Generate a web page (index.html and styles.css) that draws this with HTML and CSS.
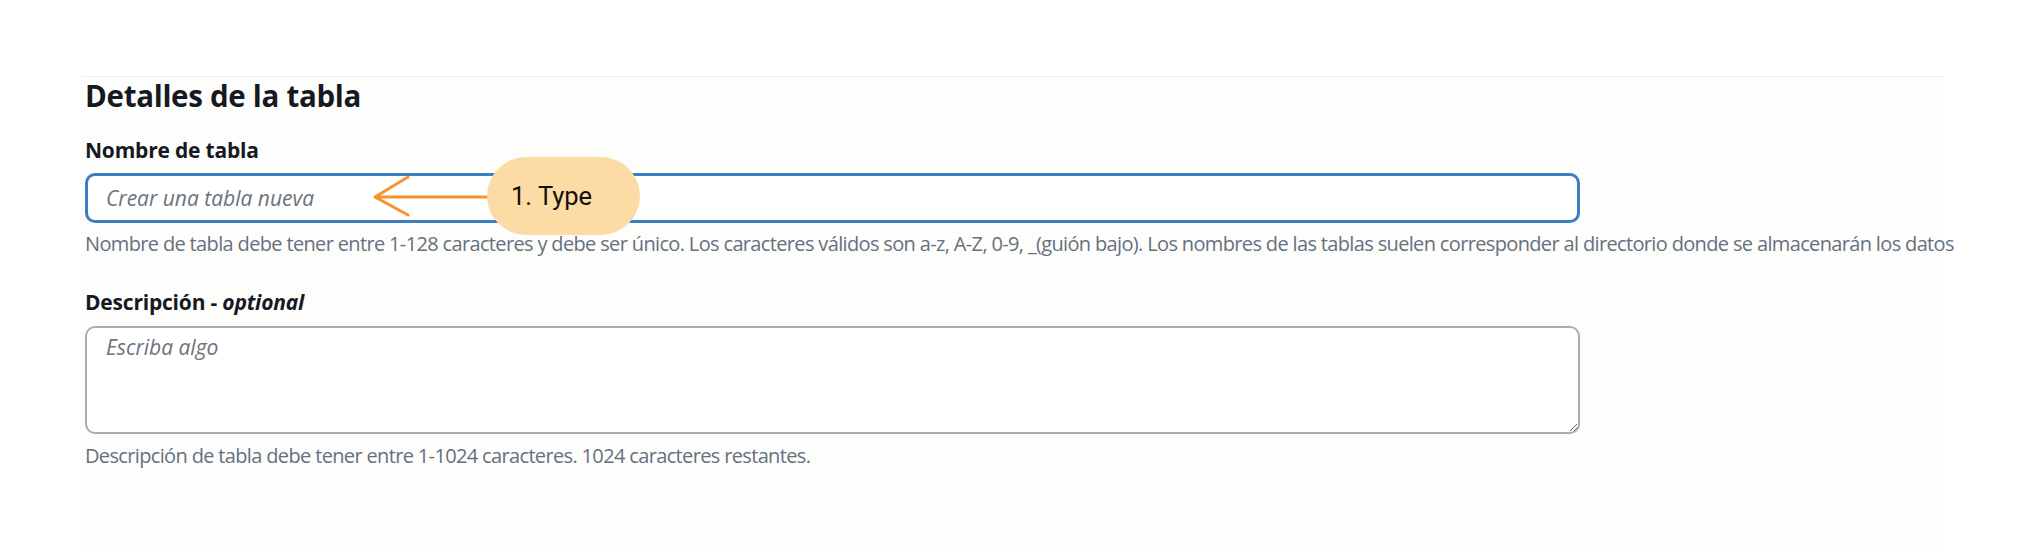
FILE: index.html
```html
<!DOCTYPE html>
<html lang="es">
<head>
<meta charset="utf-8">
<title>Detalles de la tabla</title>
<link rel="stylesheet" href="styles.css">
</head>
<body>
<section class="panel">
  <h2 class="title">Detalles de la tabla</h2>
  <div class="field">
    <label class="label" for="tname">Nombre de tabla</label>
    <input id="tname" class="input" type="text" placeholder="Crear una tabla nueva">
    <p class="hint">Nombre de tabla debe tener entre 1-128 caracteres y debe ser único. Los caracteres válidos son a-z, A-Z, 0-9, _(guión bajo). Los nombres de las tablas suelen corresponder al directorio donde se almacenarán los datos</p>
  </div>
  <div class="field">
    <label class="label" for="tdesc">Descripción - <i>optional</i></label>
    <textarea id="tdesc" class="textarea" placeholder="Escriba algo"></textarea>
    <p class="hint">Descripción de tabla debe tener entre 1-1024 caracteres. 1024 caracteres restantes.</p>
  </div>
</section>
<svg class="arrow" width="120" height="44" viewBox="0 0 120 44" aria-hidden="true">
  <path d="M3 22 H118 M36 2 L3 22 L36 40" fill="none" stroke="#f7932f" stroke-width="3" stroke-linecap="round" stroke-linejoin="round"/>
</svg>
<div class="bubble">1. Type</div>
</body>
</html>
```
FILE: styles.css
```css
html, body {
  margin: 0;
  padding: 0;
  background: #ffffff;
}
body {
  width: 2025px;
  height: 546px;
  position: relative;
  overflow: hidden;
  font-family: "Open Sans", "Noto Sans", sans-serif;
  color: #16191f;
}
.panel {
  margin: 76px 0 0 81px;
  width: 1863px;
  height: 470px;
  padding-left: 4px;
  border-top: 1px solid #f1f1ee;
  background: #fdfdfc;
  box-sizing: border-box;
}
.title {
  margin: 0;
  padding-top: 1px;
  font-size: 29.5px;
  line-height: 36px;
  font-weight: 700;
  letter-spacing: -0.3px;
}
.field {
  display: flex;
  flex-direction: column;
  align-items: flex-start;
}
.title + .field {
  margin-top: 22px;
}
.field + .field {
  margin-top: 31px;
}
.label {
  font-size: 21px;
  line-height: 28px;
  font-weight: 700;
  letter-spacing: -0.2px;
}
.label i {
  font-weight: 700;
}
.input {
  margin: 9px 0 0 0;
  width: 1495px;
  height: 50px;
  box-sizing: border-box;
  border: 3px solid #3b7dc1;
  border-radius: 10px;
  background: #ffffff;
  padding: 0 18px;
  font-family: inherit;
  font-size: 21px;
  outline: none;
}
.input::placeholder,
.textarea::placeholder {
  color: #6b737c;
  font-style: italic;
  opacity: 1;
}
.textarea {
  margin: 10px 0 0 0;
  width: 1495px;
  height: 108px;
  box-sizing: border-box;
  border: 2px solid #ababab;
  border-radius: 10px;
  background: #ffffff;
  padding: 5px 19px;
  font-family: inherit;
  font-size: 21px;
  line-height: 28px;
  outline: none;
  resize: vertical;
}
.hint {
  margin: 8px 0 0 0;
  font-size: 20px;
  line-height: 26px;
  color: #66717e;
  letter-spacing: -0.65px;
  white-space: nowrap;
}
.textarea + .hint {
  margin-top: 9px;
}
.arrow {
  position: absolute;
  left: 372px;
  top: 175px;
}
.bubble {
  position: absolute;
  left: 487px;
  top: 157px;
  width: 153px;
  height: 78px;
  box-sizing: border-box;
  padding-left: 24px;
  border-radius: 39px;
  background: #fcdba4;
  display: flex;
  align-items: center;
  font-family: Roboto, "Noto Sans", sans-serif;
  font-size: 25.5px;
  color: #111111;
}
```
